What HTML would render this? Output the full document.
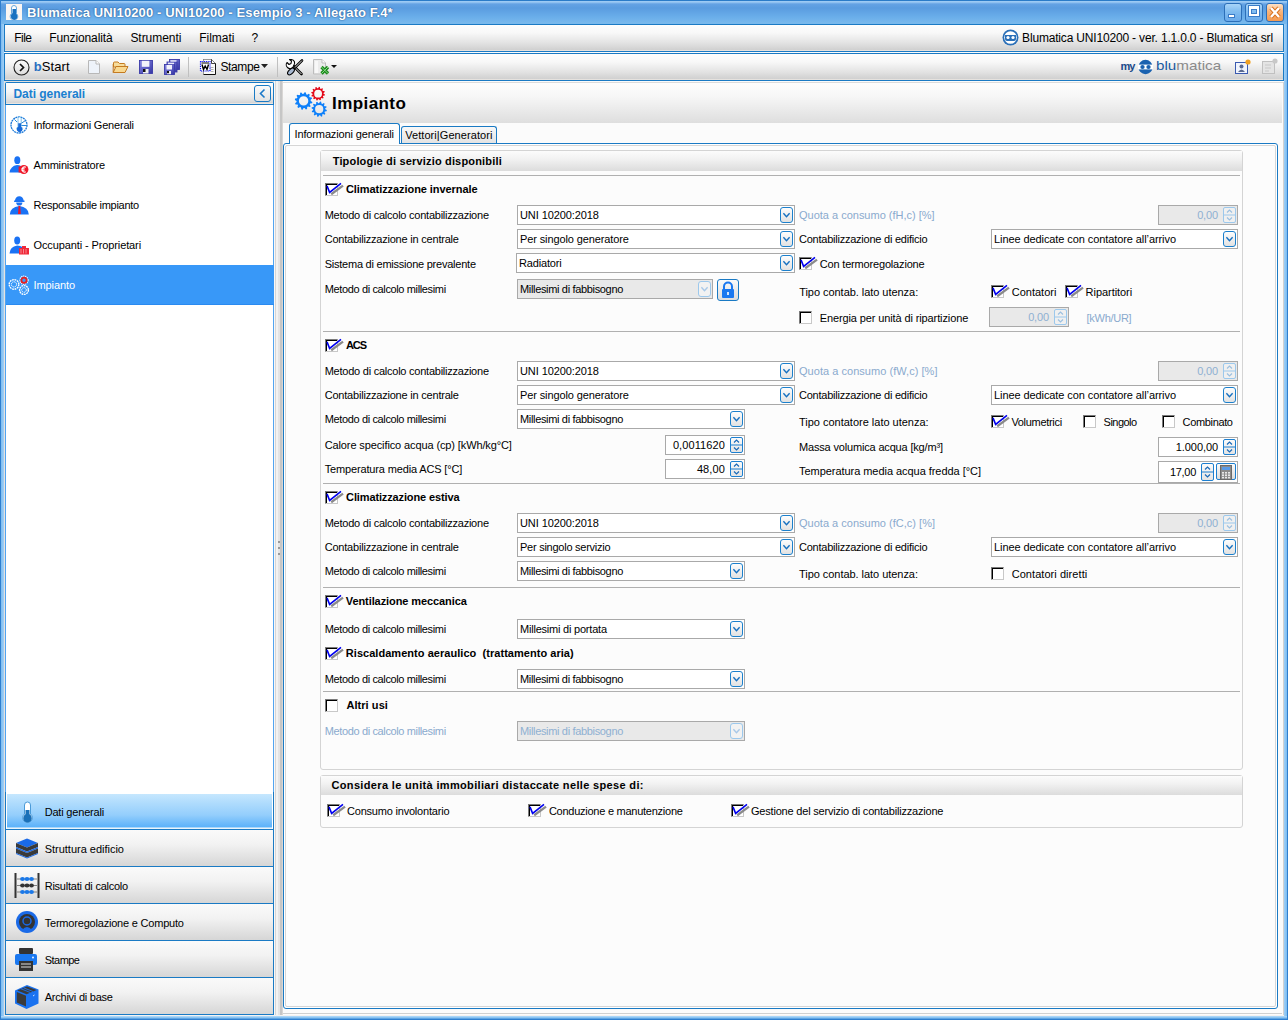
<!DOCTYPE html><html><head><meta charset="utf-8"><style>
*{margin:0;padding:0}
html,body{width:1288px;height:1020px;overflow:hidden;background:#a2d0f6}
body{position:relative;font-family:"Liberation Sans", sans-serif}
.t{position:absolute;white-space:nowrap;line-height:1;font-family:"Liberation Sans", sans-serif}
svg{overflow:visible}
</style></head><body>
<div style="position:absolute;left:0px;top:0px;width:1288px;height:1020px;background:linear-gradient(90deg,#2f7fcf 0,#2f7fcf 1px,#7cbcf0 1px,#a2d0f6 4px,#a2d0f6 1284px,#7cbcf0 1287px,#2f7fcf 1287px)"></div>
<div style="position:absolute;left:1px;top:0px;width:1286px;height:24px;background:linear-gradient(#2a7bc8 0,#2a7bc8 1px,#9ccaf4 1px,#9ccaf4 2px,#64a2e4 4px,#5a9ce0 8px,#6aaeea 17px,#78b8ec 23px,#78b8ec 24px)"></div>
<div style="position:absolute;left:1px;top:1016px;width:1286px;height:4px;background:linear-gradient(#a8d4f8 0,#a8d4f8 1px,#8cc4f0 1px,#8cc4f0 2px,#5ea4e4 2px,#5ea4e4 3px,#2f7fcf 3px)"></div>
<div style="position:absolute;left:6px;top:4px;width:16px;height:16px;background:#fbf6f2"></div>
<svg style="position:absolute;left:6px;top:4px;" width="16" height="16" viewBox="0 0 16 16"><path d="M8 1.5 a2.5 2.5 0 0 1 2.5 2.5 V9.5 a3.8 3.8 0 1 1 -5 0 V4 a2.5 2.5 0 0 1 2.5 -2.5z" fill="#fff" stroke="#6aa8dc" stroke-width="1"/><path d="M6.5 5 H10 V10 a3.2 3.2 0 1 1 -3.5 0z" fill="#1a72c0"/><circle cx="8" cy="12" r="3" fill="#1a72c0"/></svg>
<span class="t" id="t0" style="left:27px;top:6px;font-size:13px;font-weight:700;color:#fff;letter-spacing:0.112px;text-shadow:0 0 2px #2a5f9a,0 0 1px #2a5f9a">Blumatica UNI10200 - UNI10200 - Esempio 3 - Allegato F.4*</span>
<div style="position:absolute;left:1224px;top:3px;width:18px;height:19px;border:1px solid #2c6fb8;border-radius:3px;box-sizing:border-box;background:linear-gradient(#a8d4f8,#80bcf0 45%,#6aaaea)"></div>
<div style="position:absolute;left:1228px;top:14px;width:7px;height:4px;background:#fff;border:1px solid #3a7cc8;box-sizing:border-box"></div>
<div style="position:absolute;left:1245px;top:3px;width:18px;height:19px;border:1px solid #2c6fb8;border-radius:3px;box-sizing:border-box;background:linear-gradient(#a8d4f8,#80bcf0 45%,#6aaaea)"></div>
<div style="position:absolute;left:1249px;top:6px;width:10px;height:10px;border:2px solid #fff;border-top-width:3px;box-sizing:border-box;box-shadow:0 0 0 1px #3a7cc8, inset 0 0 0 1px #3a7cc8"></div>
<div style="position:absolute;left:1266px;top:3px;width:18px;height:19px;border:1px solid #2c6fb8;border-radius:3px;box-sizing:border-box;background:linear-gradient(#fde0c4,#f8b47a 45%,#f49a50)"></div>
<svg style="position:absolute;left:1266px;top:3px;" width="18" height="19" viewBox="0 0 18 19"><path d="M5 5 L13 14 M13 5 L5 14" stroke="#d8701c" stroke-width="4.2"/><path d="M5 5 L13 14 M13 5 L5 14" stroke="#fff" stroke-width="2.4"/></svg>
<div style="position:absolute;left:4px;top:24px;width:1280px;height:28px;border:1px solid #1a7ac4;box-sizing:border-box;background:linear-gradient(#fdfdfd 0,#f8f8f8 30%,#e2e2e2 70%,#d0d0d0 25px,#e6e2de 25px)"></div>
<div style="position:absolute;left:4px;top:52px;width:1280px;height:1px;background:#fbfbfb"></div>
<span class="t" id="t1" style="left:14.3px;top:32px;font-size:12px;font-weight:400;color:#000;letter-spacing:-0.581px;">File</span>
<span class="t" id="t2" style="left:49.3px;top:32px;font-size:12px;font-weight:400;color:#000;letter-spacing:-0.129px;">Funzionalità</span>
<span class="t" id="t3" style="left:130.4px;top:32px;font-size:12px;font-weight:400;color:#000;letter-spacing:-0.045px;">Strumenti</span>
<span class="t" id="t4" style="left:199.2px;top:32px;font-size:12px;font-weight:400;color:#000;letter-spacing:-0.024px;">Filmati</span>
<span class="t" id="t5" style="left:251.6px;top:32px;font-size:12px;font-weight:400;color:#000;;">?</span>
<svg style="position:absolute;left:1002px;top:29px;" width="17" height="17" viewBox="0 0 17 17"><circle cx="8.5" cy="8.5" r="8" fill="#2a6fb8"/><circle cx="8.5" cy="8.5" r="6.3" fill="#fff"/><path d="M3 6 h11 v4 a2 2 0 0 1 -2 2 h-7 a2 2 0 0 1 -2 -2z" fill="#2a6fb8"/><circle cx="6" cy="8.5" r="1.6" fill="#fff"/><circle cx="11" cy="8.5" r="1.6" fill="#fff"/></svg>
<span class="t" id="t6" style="right:15.099999999999909px;top:32px;font-size:12px;font-weight:400;color:#000;letter-spacing:-0.176px;">Blumatica UNI10200 - ver. 1.1.0.0 - Blumatica srl</span>
<div style="position:absolute;left:4px;top:53px;width:1280px;height:28px;border:1px solid #1a7ac4;box-sizing:border-box;background:linear-gradient(#fdfdfd 0,#f8f8f8 30%,#e2e2e2 70%,#d0d0d0 25px,#e6e2de 25px)"></div>
<svg style="position:absolute;left:13px;top:59px;" width="17" height="17" viewBox="0 0 17 17"><circle cx="8.5" cy="8.5" r="7.5" fill="none" stroke="#222" stroke-width="1.1"/><path d="M7 5 L10.5 8.5 L7 12" fill="none" stroke="#111" stroke-width="1.7"/></svg>
<span class="t" id="t7" style="left:33.7px;top:60px;font-size:13px;font-weight:400;color:#000;letter-spacing:0.116px;"><span style="color:#2a6fc0;font-weight:700">b</span>Start</span>
<svg style="position:absolute;left:87px;top:59px;" width="14" height="16" viewBox="0 0 14 16"><path d="M1.5 1.5 H9 L12.5 5 V14.5 H1.5z" fill="#eef3fa" stroke="#b8b8b8"/><path d="M9 1.5 V5 H12.5" fill="#fff" stroke="#b8b8b8"/></svg>
<svg style="position:absolute;left:112px;top:61px;" width="17" height="13" viewBox="0 0 17 13"><path d="M1.5 2 q0 -1 1 -1 h3.5 l1.5 1.5 h4.5 q1 0 1 1 v2.5 h-11.5z" fill="#f6dc9c" stroke="#c47a20" stroke-width="1"/><path d="M1.2 11.5 L4 5.5 H16 L13 11.5z" fill="#f8d890" stroke="#c47a20" stroke-width="1" stroke-linejoin="round"/><path d="M1.2 11.5 V3" stroke="#c47a20" stroke-width="1"/></svg>
<svg style="position:absolute;left:139px;top:60px;" width="14" height="14" viewBox="0 0 14 14"><defs><linearGradient id="fg" x1="0" y1="0" x2="1" y2="1"><stop offset="0" stop-color="#8a8ae4"/><stop offset="1" stop-color="#3434a4"/></linearGradient></defs><rect x="0.5" y="0.5" width="13" height="13" fill="url(#fg)" stroke="#3a3aa8" stroke-width="0.9"/><rect x="2.8" y="0.8" width="7.6" height="6" fill="#f2f2fa"/><rect x="4" y="9" width="5.5" height="4.5" fill="#f0f0f0"/><rect x="4" y="9" width="2.5" height="3" fill="#111"/></svg>
<svg style="position:absolute;left:164px;top:59px;" width="16" height="16" viewBox="0 0 16 16"><rect x="5.5" y="0.5" width="10" height="10" fill="url(#fg)" stroke="#3a3aa8" stroke-width="0.9"/><rect x="3" y="3" width="10" height="10" fill="url(#fg)" stroke="#3a3aa8" stroke-width="0.9"/><rect x="0.5" y="5.5" width="10" height="10" fill="url(#fg)" stroke="#3a3aa8" stroke-width="0.9"/><rect x="6.5" y="1.2" width="6" height="1.5" fill="#e8e8f8"/><rect x="4" y="3.7" width="6" height="1.5" fill="#e8e8f8"/><rect x="2.5" y="6" width="5.5" height="4.5" fill="#f2f2fa"/><rect x="3" y="12" width="4" height="3.2" fill="#f0f0f0"/><rect x="3" y="12" width="2" height="2.2" fill="#111"/></svg>
<div style="position:absolute;left:188px;top:57px;width:1px;height:20px;background:#c0c0c0"></div>
<svg style="position:absolute;left:200px;top:59px;" width="17" height="17" viewBox="0 0 17 17"><path d="M3.5 0.5 H11.5 L15.5 4.5 V15.5 H3.5z" fill="#fafafa" stroke="#111" stroke-width="1"/><path d="M3.5 15.5 V0.5 H11.5" fill="none" stroke="#9a9a9a" stroke-width="1"/><path d="M11.5 0.5 V4.5 H15.5" fill="#fff" stroke="#111" stroke-width="0.8"/><path d="M10.5 8.5 H13.5 M10.5 10.5 H13.5 M10.5 12.5 H13.5" stroke="#b0b0b0" stroke-width="1"/><rect x="0.5" y="2.5" width="9.5" height="9.5" fill="#fff" stroke="#0008f8" stroke-width="1.2" stroke-dasharray="1 0.8"/><rect x="1.5" y="3.5" width="7.5" height="1" fill="#000"/><path d="M2 5.5 L3.5 10.5 L5.2 7 L7 10.5 L8.5 5.5" fill="none" stroke="#000" stroke-width="1.4"/></svg>
<span class="t" id="t8" style="left:220.4px;top:61px;font-size:12px;font-weight:400;color:#000;letter-spacing:-0.352px;">Stampe</span>
<svg style="position:absolute;left:261px;top:64px;" width="7" height="4" viewBox="0 0 7 4"><path d="M0 0 H7 L3.5 4z" fill="#222"/></svg>
<div style="position:absolute;left:277px;top:57px;width:1px;height:20px;background:#c0c0c0"></div>
<svg style="position:absolute;left:286px;top:59px;" width="17" height="17" viewBox="0 0 17 17"><path d="M6.5 6 L15.5 15" stroke="#000" stroke-width="2.6" stroke-linecap="round"/><path d="M6.5 6 L15.5 15" stroke="#fff" stroke-width="0.9"/><path d="M1 3.5 L3 5.5 L5 4.5 L5.5 2 L3.5 0.5 L5.5 0.5 A3.5 3.5 0 0 1 8 6 L7 8 A3.5 3.5 0 0 1 1 3.5z" fill="#fff" stroke="#000" stroke-width="1.1" stroke-linejoin="round"/><path d="M16 1.5 L9 8.5" stroke="#000" stroke-width="2.6" stroke-linecap="round"/><path d="M16 1.5 L9 8.5" stroke="#fff" stroke-width="0.9"/><ellipse cx="5" cy="12.5" rx="4.2" ry="2.2" transform="rotate(-45 5 12.5)" fill="#a8b8d0" stroke="#000" stroke-width="1.1"/></svg>
<svg style="position:absolute;left:313px;top:59px;" width="17" height="17" viewBox="0 0 17 17"><path d="M0.5 0.5 H9 L12.5 4 V15 H0.5z" fill="#ececec" stroke="#bdbdbd" stroke-width="1"/><path d="M2 2 H5 V14 H2z" fill="#f8f8f8"/><path d="M9 0.5 V4 H12.5" fill="#fff" stroke="#bdbdbd" stroke-width="1"/><path d="M8.5 8 L15 14.5 M15 8 L8.5 14.5" stroke="#1a8a1a" stroke-width="3.2"/><path d="M8.5 8 L15 14.5 M15 8 L8.5 14.5" stroke="#8ad88a" stroke-width="1"/></svg>
<svg style="position:absolute;left:331px;top:65px;" width="6" height="3" viewBox="0 0 6 3"><path d="M0 0 H6 L3 3z" fill="#111"/></svg>
<span class="t" id="t9" style="left:1120.4px;top:61px;font-size:11px;font-weight:700;color:#1a4a8a;letter-spacing:-0.906px;">my</span>
<svg style="position:absolute;left:1138px;top:59px;" width="15" height="16" viewBox="0 0 15 16"><circle cx="7.5" cy="8" r="7.2" fill="#1a62b0"/><path d="M0 5.6 H15 V10.4 H0z" fill="#fff"/><ellipse cx="4.5" cy="8" rx="2.2" ry="2.1" fill="#1a62b0"/><ellipse cx="10.5" cy="8" rx="2.2" ry="2.1" fill="#1a62b0"/></svg>
<span class="t" id="t10" style="left:1156px;top:59px;font-size:13px;font-weight:400;color:#000;;transform:scale(1.17,0.92);transform-origin:0 100%"><span style="color:#1a5aa0">blu</span><span style="color:#8a8a8a">matica</span></span>
<svg style="position:absolute;left:1235px;top:59px;" width="16" height="15" viewBox="0 0 16 15"><rect x="0.5" y="3.5" width="12" height="11" fill="#f0f4fc" stroke="#3a5ab0"/><circle cx="6.5" cy="7.5" r="2" fill="#5a6a90"/><path d="M3 13 q3.5 -5 7 0z" fill="#5a6a90"/><circle cx="13" cy="3" r="2.6" fill="#f0a020"/></svg>
<svg style="position:absolute;left:1262px;top:58px;" width="16" height="16" viewBox="0 0 16 16"><rect x="0.5" y="3.5" width="12" height="12" fill="#e4e4e4" stroke="#c0c0c0"/><path d="M3 7 H9 M3 10 H9 M3 13 H7" stroke="#c8c8c8"/><circle cx="13" cy="3" r="2.6" fill="#c8c8c8"/></svg>
<div style="position:absolute;left:4px;top:81px;width:1px;height:934px;background:#e6e2de"></div>
<div style="position:absolute;left:4px;top:81px;width:270px;height:1px;background:#e4e0dc"></div>
<div style="position:absolute;left:5px;top:82px;width:269px;height:933px;border:1px solid #1a7ac4;border-radius:2px 2px 0 0;box-sizing:border-box;background:#fff"></div>
<div style="position:absolute;left:6px;top:83px;width:267px;height:21px;background:linear-gradient(#fdfdfd 0,#f6f6f6 40%,#e4e4e4 75%,#d4d4d4 20px,#ebe7e3 20px)"></div>
<div style="position:absolute;left:5px;top:104px;width:269px;height:1px;background:#1a7ac4"></div>
<span class="t" id="t11" style="left:13.4px;top:88px;font-size:12px;font-weight:700;color:#1a80d0;letter-spacing:-0.019px;">Dati generali</span>
<div style="position:absolute;left:254px;top:85px;width:17px;height:17px;border:1px solid #1a7ac4;border-radius:3px;box-sizing:border-box;background:linear-gradient(#fafafa,#e2e2e2)"></div>
<svg style="position:absolute;left:254px;top:85px;" width="17" height="17" viewBox="0 0 17 17"><path d="M10.5 4.5 L6.5 8.5 L10.5 12.5" fill="none" stroke="#1a78c8" stroke-width="1.6"/></svg>
<div style="position:absolute;left:5px;top:105px;width:1px;height:687px;background:#52a4f0"></div>
<div style="position:absolute;left:273px;top:105px;width:1px;height:687px;background:#52a4f0"></div>
<div style="position:absolute;left:273px;top:792px;width:1px;height:223px;background:#1a7ac4"></div>
<div style="position:absolute;left:6px;top:265px;width:268px;height:40px;background:linear-gradient(#3898f8 0,#3898f8 39px,#2a8af0 39px)"></div>
<span class="t" id="t12" style="left:33.5px;top:120px;font-size:11px;font-weight:400;color:#000;letter-spacing:-0.203px;">Informazioni Generali</span>
<span class="t" id="t13" style="left:33.5px;top:160px;font-size:11px;font-weight:400;color:#000;letter-spacing:-0.182px;">Amministratore</span>
<span class="t" id="t14" style="left:33.5px;top:200px;font-size:11px;font-weight:400;color:#000;letter-spacing:-0.280px;">Responsabile impianto</span>
<span class="t" id="t15" style="left:33.5px;top:240px;font-size:11px;font-weight:400;color:#000;letter-spacing:-0.111px;">Occupanti - Proprietari</span>
<span class="t" id="t16" style="left:33.5px;top:280px;font-size:11px;font-weight:400;color:#fff;letter-spacing:-0.072px;">Impianto</span>
<svg style="position:absolute;left:10px;top:116px;" width="18" height="18" viewBox="0 0 18 18"><circle cx="9" cy="9" r="8" fill="none" stroke="#1a78d8" stroke-width="1.3" stroke-dasharray="2 0.6"/><path d="M11 9.5 H17 M11 7.5 L15.5 4.5 M4.5 3.5 L7 6" stroke="#2a88d8" stroke-width="1"/><path d="M8 2.5 a1.6 1.6 0 0 1 3.2 0 V10.5 a2.8 2.8 0 1 1 -3.2 0z" fill="#fff" stroke="#5ab0e8" stroke-width="0.8"/><path d="M8.2 7.2 h2.8 v4 a2.5 2.5 0 1 1 -2.8 0z" fill="#1a6ad8"/><circle cx="9.6" cy="13" r="2.6" fill="#1a6ad8"/></svg>
<svg style="position:absolute;left:9px;top:156px;" width="20" height="18" viewBox="0 0 20 18"><ellipse cx="8.3" cy="4.2" rx="3" ry="3.9" fill="#1a72f4"/><path d="M0.5 16.5 q1 -6.5 7.5 -7.5 q2.5 0 4 1 V16.5z" fill="#1a72f4"/><rect x="9.6" y="10.5" width="1.7" height="6" fill="#f01828"/><circle cx="14.8" cy="13.5" r="4.6" fill="#f01828"/><path d="M16.8 11.2 a2.6 2.6 0 1 0 0 4.6 M12.4 12.8 h3.2 M12.4 14.3 h3.2" fill="none" stroke="#fff" stroke-width="1.1"/></svg>
<svg style="position:absolute;left:9px;top:195px;" width="20" height="20" viewBox="0 0 20 20"><path d="M6 5.6 a4.3 4.3 0 0 1 8.6 0 h0.9 v1.4 h-10.4 v-1.4z" fill="#1a72f4"/><path d="M7.2 7.5 a3.1 3.1 0 0 0 6.2 0z" fill="#1a72f4"/><path d="M0.8 19.5 q0.3 -7.5 9.5 -8.5 q9.2 1 9.5 8.5z" fill="#1a72f4"/><path d="M9.5 11 h1.8 v1.5 l0.5 6.5 h-2.8 l0.5 -6.5z" fill="#f01828"/></svg>
<svg style="position:absolute;left:9px;top:236px;" width="21" height="19" viewBox="0 0 21 19"><ellipse cx="8.2" cy="4.5" rx="3" ry="4" fill="#1a72f4"/><path d="M0.5 17.5 q0.5 -7 7.7 -8 q3.5 0 5 1.5 V17.5z" fill="#1a72f4"/><rect x="10" y="12" width="10" height="6.5" fill="#f02838"/><rect x="13" y="10" width="4" height="2" fill="#f02838"/><path d="M12 13 v4.5 M14.5 13 v4.5 M17 13 v4.5" stroke="#fff" stroke-width="0.8" opacity="0.55"/></svg>
<svg style="position:absolute;left:8px;top:276px;" width="22" height="20" viewBox="0 0 22 20"><circle cx="6" cy="8.4" r="4.8" fill="none" stroke="#fff" stroke-width="1.4" stroke-dasharray="1.8 0.7"/><circle cx="6" cy="8.4" r="2.6" fill="none" stroke="#fff" stroke-width="1" stroke-dasharray="1.4 0.6"/><circle cx="16" cy="4.2" r="4.1" fill="none" stroke="#fff" stroke-width="1.2" stroke-dasharray="1.2 0.8"/><circle cx="16" cy="4.2" r="2.6" fill="none" stroke="#e82020" stroke-width="1.8"/><circle cx="16" cy="14" r="4.4" fill="none" stroke="#fff" stroke-width="1.4" stroke-dasharray="1.8 0.7"/><circle cx="16" cy="14" r="2.3" fill="none" stroke="#fff" stroke-width="1" stroke-dasharray="1.4 0.6"/></svg>
<div style="position:absolute;left:5px;top:792px;width:1px;height:223px;background:#1a7ac4"></div>
<div style="position:absolute;left:7px;top:794px;width:265px;height:35px;background:linear-gradient(#c6e7fe 0,#b0dcfd 25%,#94cefc 60%,#5cb2fa 33px,#a8d8fc 33px,#a8d8fc 34px,#eaf4fc 34px)"></div>
<div style="position:absolute;left:5px;top:829px;width:269px;height:1px;background:#1a7ac4"></div>
<span class="t" id="t17" style="left:44.7px;top:807.0px;font-size:11px;font-weight:400;color:#000;letter-spacing:-0.189px;">Dati generali</span>
<div style="position:absolute;left:6px;top:830px;width:267px;height:36px;background:linear-gradient(#fafafa,#f2f2f2 40%,#d6d6d6)"></div>
<div style="position:absolute;left:5px;top:866px;width:269px;height:1px;background:#1a7ac4"></div>
<span class="t" id="t18" style="left:44.7px;top:844.0px;font-size:11px;font-weight:400;color:#000;letter-spacing:-0.011px;">Struttura edificio</span>
<div style="position:absolute;left:6px;top:867px;width:267px;height:36px;background:linear-gradient(#fafafa,#f2f2f2 40%,#d6d6d6)"></div>
<div style="position:absolute;left:5px;top:903px;width:269px;height:1px;background:#1a7ac4"></div>
<span class="t" id="t19" style="left:44.7px;top:881.0px;font-size:11px;font-weight:400;color:#000;letter-spacing:-0.239px;">Risultati di calcolo</span>
<div style="position:absolute;left:6px;top:904px;width:267px;height:36px;background:linear-gradient(#fafafa,#f2f2f2 40%,#d6d6d6)"></div>
<div style="position:absolute;left:5px;top:940px;width:269px;height:1px;background:#1a7ac4"></div>
<span class="t" id="t20" style="left:44.7px;top:918.0px;font-size:11px;font-weight:400;color:#000;letter-spacing:-0.200px;">Termoregolazione e Computo</span>
<div style="position:absolute;left:6px;top:941px;width:267px;height:36px;background:linear-gradient(#fafafa,#f2f2f2 40%,#d6d6d6)"></div>
<div style="position:absolute;left:5px;top:977px;width:269px;height:1px;background:#1a7ac4"></div>
<span class="t" id="t21" style="left:44.7px;top:955.0px;font-size:11px;font-weight:400;color:#000;letter-spacing:-0.524px;">Stampe</span>
<div style="position:absolute;left:6px;top:978px;width:267px;height:36px;background:linear-gradient(#fafafa,#f2f2f2 40%,#d6d6d6)"></div>
<div style="position:absolute;left:5px;top:1014px;width:269px;height:1px;background:#1a7ac4"></div>
<span class="t" id="t22" style="left:44.7px;top:992.0px;font-size:11px;font-weight:400;color:#000;letter-spacing:-0.232px;">Archivi di base</span>
<svg style="position:absolute;left:22px;top:801px;" width="11" height="22" viewBox="0 0 11 22"><path d="M5.5 1 a3 3 0 0 1 3 3 V13 a4.8 4.8 0 1 1 -6 0 V4 a3 3 0 0 1 3 -3z" fill="#fff" stroke="#4a9ad8" stroke-width="1"/><path d="M3.5 9 H7.5 V14 a4 4 0 1 1 -4 0z" fill="#1a70b8"/><circle cx="5.5" cy="17" r="4" fill="#1a70b8"/></svg>
<svg style="position:absolute;left:15px;top:838px;" width="24" height="21" viewBox="0 0 24 21"><path d="M12 0.5 L23 5 L12 9.5 L1 5z" fill="#1a6ae8"/><path d="M1 5 V9 L12 13.5 L23 9 V5 L12 9.5z" fill="#3a3a3a"/><path d="M1 9 V10.5 L12 15 L23 10.5 V9 L12 13.5z" fill="#1a6ae8"/><path d="M1 10.5 V15 L12 19.5 L23 15 V10.5 L12 15z" fill="#3a3a3a"/><path d="M1 15 V16 L12 20.5 L23 16 V15 L12 19.5z" fill="#1a6ae8"/></svg>
<svg style="position:absolute;left:14px;top:873px;" width="26" height="25" viewBox="0 0 26 25"><rect x="0.5" y="0" width="2" height="25" fill="#333"/><rect x="23.5" y="0" width="2" height="25" fill="#333"/><line x1="3" y1="6" x2="23" y2="6" stroke="#666" stroke-width="0.8"/><line x1="3" y1="12.5" x2="23" y2="12.5" stroke="#666" stroke-width="0.8"/><line x1="3" y1="19" x2="23" y2="19" stroke="#666" stroke-width="0.8"/><ellipse cx="8.5" cy="6" rx="2.4" ry="2.1" fill="#1a78e8"/><ellipse cx="13" cy="6" rx="2.4" ry="2.1" fill="#1a78e8"/><ellipse cx="17.5" cy="6" rx="2.4" ry="2.1" fill="#1a78e8"/><ellipse cx="8.5" cy="12.5" rx="2.4" ry="2.1" fill="#333"/><ellipse cx="13" cy="12.5" rx="2.4" ry="2.1" fill="#333"/><ellipse cx="17.5" cy="12.5" rx="2.4" ry="2.1" fill="#333"/><ellipse cx="8.5" cy="19" rx="2.4" ry="2.1" fill="#1a78e8"/><ellipse cx="13" cy="19" rx="2.4" ry="2.1" fill="#1a78e8"/><ellipse cx="17.5" cy="19" rx="2.4" ry="2.1" fill="#1a78e8"/></svg>
<svg style="position:absolute;left:15px;top:910px;" width="24" height="24" viewBox="0 0 24 24"><circle cx="12" cy="12" r="11" fill="#1a6ae8"/><circle cx="12" cy="12" r="8" fill="#333"/><circle cx="12" cy="11" r="4" fill="none" stroke="#1a6ae8" stroke-width="1.5"/><path d="M7 20 q5 -6 10 0" fill="#1a6ae8"/></svg>
<svg style="position:absolute;left:15px;top:948px;" width="22" height="23" viewBox="0 0 22 23"><rect x="4" y="0" width="14" height="6" fill="#333" rx="1"/><rect x="0" y="6" width="22" height="11" rx="2" fill="#1a78f0"/><rect x="4" y="13" width="14" height="10" fill="#333"/><path d="M6 16 H16 M6 19 H16" stroke="#ddd" stroke-width="1"/><circle cx="18" cy="9.5" r="0.9" fill="#fff"/></svg>
<svg style="position:absolute;left:14px;top:984px;" width="25" height="26" viewBox="0 0 25 26"><path d="M1 6.5 L13 1 L24.5 5.5 V19.5 L12.5 25 L1 19.5z" fill="#1a72f0"/><path d="M2.8 8 L12 11.8 V22.6 L2.8 18.5z" fill="#3a3a3a"/><path d="M3.2 6.5 L13 2.4 L22.6 6 L12.6 10.2z" fill="#3a3a3a"/><path d="M7 4.8 L16.5 8.6 M9.5 3.8 L19 7.5" stroke="#1a72f0" stroke-width="0.9"/><path d="M19 12 l1.5 -1" stroke="#fff" stroke-width="0.8"/></svg>
<div style="position:absolute;left:274px;top:81px;width:9px;height:934px;background:linear-gradient(90deg,#f8f8f8 0,#f8f8f8 1px,#d6d6d6 1px,#d6d6d6 2px,#f2f2f2 2px,#f2f2f2 4px,#e4e4e4 4px,#e4e4e4 6px,#c6c6c6 6px,#c6c6c6 8px,#d8d6d4 8px)"></div>
<div style="position:absolute;left:278px;top:541px;width:2px;height:2px;background:#999"></div>
<div style="position:absolute;left:278px;top:547px;width:2px;height:2px;background:#999"></div>
<div style="position:absolute;left:278px;top:553px;width:2px;height:2px;background:#999"></div>
<div style="position:absolute;left:283px;top:81px;width:1001px;height:934px;background:#fbfbfb"></div>
<div style="position:absolute;left:283px;top:82px;width:1000px;height:1px;background:#dcdcdc"></div>
<div style="position:absolute;left:283px;top:83px;width:999px;height:40px;background:linear-gradient(#fdfdfd,#f6f6f6 35%,#dedede)"></div>
<div style="position:absolute;left:1283px;top:82px;width:1px;height:933px;background:#d2d2d2"></div>
<svg style="position:absolute;left:294px;top:85px;" width="34" height="33" viewBox="0 0 34 33"><path d="M16.70 15.90 L18.34 16.91 L18.10 18.18 L16.20 18.51 L15.75 19.45 L16.66 21.15 L15.82 22.12 L14.01 21.46 L13.15 22.05 L13.09 23.98 L11.88 24.40 L10.64 22.92 L9.60 23.00 L8.59 24.64 L7.32 24.40 L6.99 22.50 L6.05 22.05 L4.35 22.96 L3.38 22.12 L4.04 20.31 L3.45 19.45 L1.52 19.39 L1.10 18.18 L2.58 16.94 L2.50 15.90 L0.86 14.89 L1.10 13.62 L3.00 13.29 L3.45 12.35 L2.54 10.65 L3.38 9.68 L5.19 10.34 L6.05 9.75 L6.11 7.82 L7.32 7.40 L8.56 8.88 L9.60 8.80 L10.61 7.16 L11.88 7.40 L12.21 9.30 L13.15 9.75 L14.85 8.84 L15.82 9.68 L15.16 11.49 L15.75 12.35 L17.68 12.41 L18.10 13.62 L16.62 14.86Z M14.3 15.9 A4.7 4.7 0 1 0 4.8999999999999995 15.9 A4.7 4.7 0 1 0 14.3 15.9Z" fill="#0e80fa" fill-rule="evenodd"/><path d="M29.60 8.70 L30.95 9.49 L30.76 10.49 L29.21 10.72 L28.86 11.45 L29.64 12.81 L28.98 13.58 L27.52 13.01 L26.85 13.46 L26.84 15.03 L25.89 15.36 L24.90 14.14 L24.10 14.20 L23.31 15.55 L22.31 15.36 L22.08 13.81 L21.35 13.46 L19.99 14.24 L19.22 13.58 L19.79 12.12 L19.34 11.45 L17.77 11.44 L17.44 10.49 L18.66 9.50 L18.60 8.70 L17.25 7.91 L17.44 6.91 L18.99 6.68 L19.34 5.95 L18.56 4.59 L19.22 3.82 L20.68 4.39 L21.35 3.94 L21.36 2.37 L22.31 2.04 L23.30 3.26 L24.10 3.20 L24.89 1.85 L25.89 2.04 L26.12 3.59 L26.85 3.94 L28.21 3.16 L28.98 3.82 L28.41 5.28 L28.86 5.95 L30.43 5.96 L30.76 6.91 L29.54 7.90Z M28.0 8.7 A3.9 3.9 0 1 0 20.200000000000003 8.7 A3.9 3.9 0 1 0 28.0 8.7Z" fill="#e40818" fill-rule="evenodd"/><path d="M31.30 24.20 L32.85 25.09 L32.64 26.19 L30.87 26.45 L30.48 27.25 L31.38 28.79 L30.64 29.64 L28.99 28.98 L28.25 29.48 L28.26 31.27 L27.19 31.64 L26.09 30.23 L25.20 30.30 L24.31 31.85 L23.21 31.64 L22.95 29.87 L22.15 29.48 L20.61 30.38 L19.76 29.64 L20.42 27.99 L19.92 27.25 L18.13 27.26 L17.76 26.19 L19.17 25.09 L19.10 24.20 L17.55 23.31 L17.76 22.21 L19.53 21.95 L19.92 21.15 L19.02 19.61 L19.76 18.76 L21.41 19.42 L22.15 18.92 L22.14 17.13 L23.21 16.76 L24.31 18.17 L25.20 18.10 L26.09 16.55 L27.19 16.76 L27.45 18.53 L28.25 18.92 L29.79 18.02 L30.64 18.76 L29.98 20.41 L30.48 21.15 L32.27 21.14 L32.64 22.21 L31.23 23.31Z M29.299999999999997 24.2 A4.1 4.1 0 1 0 21.1 24.2 A4.1 4.1 0 1 0 29.299999999999997 24.2Z" fill="#0e80fa" fill-rule="evenodd"/></svg>
<span class="t" id="t23" style="left:332px;top:95px;font-size:17px;font-weight:700;color:#000;letter-spacing:0.422px;font-family:"Liberation Sans",sans-serif">Impianto</span>
<div style="position:absolute;left:401px;top:126px;width:96px;height:18px;border:1px solid #1a7ac4;border-bottom:none;border-radius:3px 3px 0 0;box-sizing:border-box;background:linear-gradient(#f8f8f8,#e2e2e2)"></div>
<span class="t" id="t24" style="left:405.2px;top:129.5px;font-size:11px;font-weight:400;color:#000;letter-spacing:0.070px;">Vettori|Generatori</span>
<div style="position:absolute;left:283px;top:143px;width:995px;height:866px;border:1px solid #1a7ac4;border-radius:3px;box-sizing:border-box;background:#fff"></div>
<div style="position:absolute;left:285px;top:145px;width:991px;height:862px;border:1px solid #d6d6d6;border-radius:2px;box-sizing:border-box;background:#fcfcfc"></div>
<div style="position:absolute;left:289px;top:123px;width:111px;height:21px;border:1px solid #1a7ac4;border-bottom:none;border-radius:3px 3px 0 0;box-sizing:border-box;background:#fdfdfd"></div>
<span class="t" id="t25" style="left:294.5px;top:128.6px;font-size:11px;font-weight:400;color:#000;letter-spacing:-0.131px;">Informazioni generali</span>
<div style="position:absolute;left:283px;top:1013px;width:999px;height:1px;background:#d0d0d0"></div>
<div style="position:absolute;left:4px;top:1015px;width:1280px;height:1px;background:#f4f2f0"></div>
<div style="position:absolute;left:320px;top:150px;width:923px;height:620px;border:1px solid #d4d4d4;border-radius:3px;box-sizing:border-box;background:#fcfcfc"></div>
<div style="position:absolute;left:321px;top:151px;width:921px;height:20px;background:linear-gradient(#fcfcfc,#f2f2f2 40%,#dcdcdc)"></div>
<span class="t" id="t26" style="left:332.7px;top:156px;font-size:11px;font-weight:700;color:#000;letter-spacing:0.169px;">Tipologie di servizio disponibili</span>
<div style="position:absolute;left:323px;top:175px;width:917px;height:1px;background:#b0b0b0"></div>
<div style="position:absolute;left:325px;top:183px;width:13px;height:13px;border-left:1px solid #7a7a7a;border-top:1px solid #7a7a7a;border-right:1px solid #c8c8c8;border-bottom:1px solid #c8c8c8;box-sizing:border-box;background:#fff"></div>
<div style="position:absolute;left:326px;top:184px;width:11px;height:11px;border-left:1px solid #000;border-top:1px solid #000;box-sizing:border-box"></div>
<svg style="position:absolute;left:325px;top:182px;" width="20" height="15" viewBox="0 0 20 15"><path d="M6.2 12.3 L18 3.6" fill="none" stroke="#8a8a8a" stroke-width="2.3"/><path d="M2 3.9 L4.6 10.4 L16 1.3" fill="none" stroke="#0000f0" stroke-width="1.6"/></svg>
<span class="t" id="t27" style="left:346px;top:184px;font-size:11px;font-weight:700;color:#000;letter-spacing:-0.069px;">Climatizzazione invernale</span>
<span class="t" id="t28" style="left:324.7px;top:210px;font-size:11px;font-weight:400;color:#000;letter-spacing:-0.239px;">Metodo di calcolo contabilizzazione</span>
<div style="position:absolute;left:517px;top:205px;width:278px;height:20px;border:1px solid #a9a9a9;box-sizing:border-box;background:#fff"></div>
<span class="t" id="t29" style="left:520px;top:210px;font-size:11px;font-weight:400;color:#000;letter-spacing:-0.087px;">UNI 10200:2018</span>
<div style="position:absolute;left:780px;top:207px;width:13px;height:16px;border:1px solid #1c80cc;border-radius:3px;box-sizing:border-box;background:linear-gradient(#fdfdfd,#e2e2e2)"></div>
<svg style="position:absolute;left:780px;top:207px;" width="13" height="16" viewBox="0 0 13 16"><path d="M3.4 6.2 L6.5 9.6 L9.6 6.2" fill="none" stroke="#1670c0" stroke-width="1.4"/></svg>
<span class="t" id="t30" style="left:799px;top:210px;font-size:11px;font-weight:400;color:#8aaace;letter-spacing:-0.005px;">Quota a consumo (fH,c) [%]</span>
<div style="position:absolute;left:1158px;top:205px;width:80px;height:20px;border:1px solid #a9a9a9;box-sizing:border-box;background:#e9e9e9"></div>
<div style="position:absolute;left:1223px;top:207px;width:13px;height:16px;border:1px solid #9cc8ec;border-radius:2px;box-sizing:border-box;background:#f0f0f0"></div>
<svg style="position:absolute;left:1223px;top:207px;" width="13" height="16" viewBox="0 0 13 16"><line x1="1" y1="8.0" x2="12" y2="8.0" stroke="#9cc8ec" stroke-width="1"/><path d="M4 5.5 L6.5 3.0 L9 5.5" fill="none" stroke="#9cc0e0" stroke-width="1.2"/><path d="M4 10.5 L6.5 13.0 L9 10.5" fill="none" stroke="#9cc0e0" stroke-width="1.2"/></svg>
<span class="t" id="t31" style="right:70px;top:210px;font-size:11px;font-weight:400;color:#8fb0d2;letter-spacing:-0.141px;">0,00</span>
<span class="t" id="t32" style="left:324.7px;top:234px;font-size:11px;font-weight:400;color:#000;letter-spacing:-0.205px;">Contabilizzazione in centrale</span>
<div style="position:absolute;left:517px;top:229px;width:278px;height:20px;border:1px solid #a9a9a9;box-sizing:border-box;background:#fff"></div>
<span class="t" id="t33" style="left:520px;top:234px;font-size:11px;font-weight:400;color:#000;letter-spacing:-0.119px;">Per singolo generatore</span>
<div style="position:absolute;left:780px;top:231px;width:13px;height:16px;border:1px solid #1c80cc;border-radius:3px;box-sizing:border-box;background:linear-gradient(#fdfdfd,#e2e2e2)"></div>
<svg style="position:absolute;left:780px;top:231px;" width="13" height="16" viewBox="0 0 13 16"><path d="M3.4 6.2 L6.5 9.6 L9.6 6.2" fill="none" stroke="#1670c0" stroke-width="1.4"/></svg>
<span class="t" id="t34" style="left:799px;top:234px;font-size:11px;font-weight:400;color:#000;letter-spacing:-0.237px;">Contabilizzazione di edificio</span>
<div style="position:absolute;left:991px;top:229px;width:247px;height:20px;border:1px solid #a9a9a9;box-sizing:border-box;background:#fff"></div>
<span class="t" id="t35" style="left:994px;top:234px;font-size:11px;font-weight:400;color:#000;letter-spacing:-0.086px;">Linee dedicate con contatore all’arrivo</span>
<div style="position:absolute;left:1223px;top:231px;width:13px;height:16px;border:1px solid #1c80cc;border-radius:3px;box-sizing:border-box;background:linear-gradient(#fdfdfd,#e2e2e2)"></div>
<svg style="position:absolute;left:1223px;top:231px;" width="13" height="16" viewBox="0 0 13 16"><path d="M3.4 6.2 L6.5 9.6 L9.6 6.2" fill="none" stroke="#1670c0" stroke-width="1.4"/></svg>
<span class="t" id="t36" style="left:324.7px;top:259px;font-size:11px;font-weight:400;color:#000;letter-spacing:-0.235px;">Sistema di emissione prevalente</span>
<div style="position:absolute;left:516px;top:253px;width:279px;height:20px;border:1px solid #a9a9a9;box-sizing:border-box;background:#fff"></div>
<span class="t" id="t37" style="left:519px;top:258px;font-size:11px;font-weight:400;color:#000;letter-spacing:-0.166px;">Radiatori</span>
<div style="position:absolute;left:780px;top:255px;width:13px;height:16px;border:1px solid #1c80cc;border-radius:3px;box-sizing:border-box;background:linear-gradient(#fdfdfd,#e2e2e2)"></div>
<svg style="position:absolute;left:780px;top:255px;" width="13" height="16" viewBox="0 0 13 16"><path d="M3.4 6.2 L6.5 9.6 L9.6 6.2" fill="none" stroke="#1670c0" stroke-width="1.4"/></svg>
<div style="position:absolute;left:799px;top:257px;width:13px;height:13px;border-left:1px solid #7a7a7a;border-top:1px solid #7a7a7a;border-right:1px solid #c8c8c8;border-bottom:1px solid #c8c8c8;box-sizing:border-box;background:#fff"></div>
<div style="position:absolute;left:800px;top:258px;width:11px;height:11px;border-left:1px solid #000;border-top:1px solid #000;box-sizing:border-box"></div>
<svg style="position:absolute;left:799px;top:256px;" width="20" height="15" viewBox="0 0 20 15"><path d="M6.2 12.3 L18 3.6" fill="none" stroke="#8a8a8a" stroke-width="2.3"/><path d="M2 3.9 L4.6 10.4 L16 1.3" fill="none" stroke="#0000f0" stroke-width="1.6"/></svg>
<span class="t" id="t38" style="left:819.7px;top:259px;font-size:11px;font-weight:400;color:#000;letter-spacing:-0.170px;">Con termoregolazione</span>
<span class="t" id="t39" style="left:324.7px;top:284px;font-size:11px;font-weight:400;color:#000;letter-spacing:-0.363px;">Metodo di calcolo millesimi</span>
<div style="position:absolute;left:517px;top:279px;width:196px;height:20px;border:1px solid #a9a9a9;box-sizing:border-box;background:#e9e9e9"></div>
<span class="t" id="t40" style="left:520px;top:284px;font-size:11px;font-weight:400;color:#000;letter-spacing:-0.335px;">Millesimi di fabbisogno</span>
<div style="position:absolute;left:698px;top:281px;width:13px;height:16px;border:1px solid #9cc8ec;border-radius:3px;box-sizing:border-box;background:#f2f2f2"></div>
<svg style="position:absolute;left:698px;top:281px;" width="13" height="16" viewBox="0 0 13 16"><path d="M3.4 6.2 L6.5 9.6 L9.6 6.2" fill="none" stroke="#a8c8e8" stroke-width="1.4"/></svg>
<div style="position:absolute;left:717px;top:279px;width:22px;height:22px;border:1px solid #1a7ac4;border-radius:3px;box-sizing:border-box;background:linear-gradient(#fafafa,#dcdcdc)"></div>
<svg style="position:absolute;left:717px;top:279px;" width="22" height="22" viewBox="0 0 22 22"><path d="M7 10 V7.5 a4 4 0 0 1 8 0 V10" fill="none" stroke="#1a78f0" stroke-width="2"/><rect x="5" y="10" width="12" height="9" rx="1" fill="#1a78f0"/><rect x="10.2" y="13" width="1.6" height="3" fill="#fff"/></svg>
<span class="t" id="t41" style="left:799.2px;top:287px;font-size:11px;font-weight:400;color:#000;letter-spacing:-0.044px;">Tipo contab. lato utenza:</span>
<div style="position:absolute;left:991px;top:285px;width:13px;height:13px;border-left:1px solid #7a7a7a;border-top:1px solid #7a7a7a;border-right:1px solid #c8c8c8;border-bottom:1px solid #c8c8c8;box-sizing:border-box;background:#fff"></div>
<div style="position:absolute;left:992px;top:286px;width:11px;height:11px;border-left:1px solid #000;border-top:1px solid #000;box-sizing:border-box"></div>
<svg style="position:absolute;left:991px;top:284px;" width="20" height="15" viewBox="0 0 20 15"><path d="M6.2 12.3 L18 3.6" fill="none" stroke="#8a8a8a" stroke-width="2.3"/><path d="M2 3.9 L4.6 10.4 L16 1.3" fill="none" stroke="#0000f0" stroke-width="1.6"/></svg>
<span class="t" id="t42" style="left:1011.7px;top:286.5px;font-size:11px;font-weight:400;color:#000;letter-spacing:0.007px;">Contatori</span>
<div style="position:absolute;left:1065px;top:285px;width:13px;height:13px;border-left:1px solid #7a7a7a;border-top:1px solid #7a7a7a;border-right:1px solid #c8c8c8;border-bottom:1px solid #c8c8c8;box-sizing:border-box;background:#fff"></div>
<div style="position:absolute;left:1066px;top:286px;width:11px;height:11px;border-left:1px solid #000;border-top:1px solid #000;box-sizing:border-box"></div>
<svg style="position:absolute;left:1065px;top:284px;" width="20" height="15" viewBox="0 0 20 15"><path d="M6.2 12.3 L18 3.6" fill="none" stroke="#8a8a8a" stroke-width="2.3"/><path d="M2 3.9 L4.6 10.4 L16 1.3" fill="none" stroke="#0000f0" stroke-width="1.6"/></svg>
<span class="t" id="t43" style="left:1085.6px;top:286.5px;font-size:11px;font-weight:400;color:#000;letter-spacing:-0.048px;">Ripartitori</span>
<div style="position:absolute;left:799px;top:311px;width:13px;height:13px;border-left:1px solid #7a7a7a;border-top:1px solid #7a7a7a;border-right:1px solid #c8c8c8;border-bottom:1px solid #c8c8c8;box-sizing:border-box;background:#fff"></div>
<div style="position:absolute;left:800px;top:312px;width:11px;height:11px;border-left:1px solid #000;border-top:1px solid #000;box-sizing:border-box"></div>
<span class="t" id="t44" style="left:819.7px;top:313px;font-size:11px;font-weight:400;color:#000;letter-spacing:-0.115px;">Energia per unità di ripartizione</span>
<div style="position:absolute;left:989px;top:307px;width:80px;height:20px;border:1px solid #a9a9a9;box-sizing:border-box;background:#e9e9e9"></div>
<div style="position:absolute;left:1054px;top:309px;width:13px;height:16px;border:1px solid #9cc8ec;border-radius:2px;box-sizing:border-box;background:#f0f0f0"></div>
<svg style="position:absolute;left:1054px;top:309px;" width="13" height="16" viewBox="0 0 13 16"><line x1="1" y1="8.0" x2="12" y2="8.0" stroke="#9cc8ec" stroke-width="1"/><path d="M4 5.5 L6.5 3.0 L9 5.5" fill="none" stroke="#9cc0e0" stroke-width="1.2"/><path d="M4 10.5 L6.5 13.0 L9 10.5" fill="none" stroke="#9cc0e0" stroke-width="1.2"/></svg>
<span class="t" id="t45" style="right:239px;top:312px;font-size:11px;font-weight:400;color:#8fb0d2;letter-spacing:-0.141px;">0,00</span>
<span class="t" id="t46" style="left:1086.6px;top:313px;font-size:11px;font-weight:400;color:#8aaace;letter-spacing:-0.295px;">[kWh/UR]</span>
<div style="position:absolute;left:323px;top:331px;width:917px;height:1px;background:#b0b0b0"></div>
<div style="position:absolute;left:325px;top:339px;width:13px;height:13px;border-left:1px solid #7a7a7a;border-top:1px solid #7a7a7a;border-right:1px solid #c8c8c8;border-bottom:1px solid #c8c8c8;box-sizing:border-box;background:#fff"></div>
<div style="position:absolute;left:326px;top:340px;width:11px;height:11px;border-left:1px solid #000;border-top:1px solid #000;box-sizing:border-box"></div>
<svg style="position:absolute;left:325px;top:338px;" width="20" height="15" viewBox="0 0 20 15"><path d="M6.2 12.3 L18 3.6" fill="none" stroke="#8a8a8a" stroke-width="2.3"/><path d="M2 3.9 L4.6 10.4 L16 1.3" fill="none" stroke="#0000f0" stroke-width="1.6"/></svg>
<span class="t" id="t47" style="left:346px;top:340px;font-size:11px;font-weight:700;color:#000;letter-spacing:-1.117px;">ACS</span>
<span class="t" id="t48" style="left:324.7px;top:366px;font-size:11px;font-weight:400;color:#000;letter-spacing:-0.239px;">Metodo di calcolo contabilizzazione</span>
<div style="position:absolute;left:517px;top:361px;width:278px;height:20px;border:1px solid #a9a9a9;box-sizing:border-box;background:#fff"></div>
<span class="t" id="t49" style="left:520px;top:366px;font-size:11px;font-weight:400;color:#000;letter-spacing:-0.087px;">UNI 10200:2018</span>
<div style="position:absolute;left:780px;top:363px;width:13px;height:16px;border:1px solid #1c80cc;border-radius:3px;box-sizing:border-box;background:linear-gradient(#fdfdfd,#e2e2e2)"></div>
<svg style="position:absolute;left:780px;top:363px;" width="13" height="16" viewBox="0 0 13 16"><path d="M3.4 6.2 L6.5 9.6 L9.6 6.2" fill="none" stroke="#1670c0" stroke-width="1.4"/></svg>
<span class="t" id="t50" style="left:799px;top:366px;font-size:11px;font-weight:400;color:#8aaace;letter-spacing:0.037px;">Quota a consumo (fW,c) [%]</span>
<div style="position:absolute;left:1158px;top:361px;width:80px;height:20px;border:1px solid #a9a9a9;box-sizing:border-box;background:#e9e9e9"></div>
<div style="position:absolute;left:1223px;top:363px;width:13px;height:16px;border:1px solid #9cc8ec;border-radius:2px;box-sizing:border-box;background:#f0f0f0"></div>
<svg style="position:absolute;left:1223px;top:363px;" width="13" height="16" viewBox="0 0 13 16"><line x1="1" y1="8.0" x2="12" y2="8.0" stroke="#9cc8ec" stroke-width="1"/><path d="M4 5.5 L6.5 3.0 L9 5.5" fill="none" stroke="#9cc0e0" stroke-width="1.2"/><path d="M4 10.5 L6.5 13.0 L9 10.5" fill="none" stroke="#9cc0e0" stroke-width="1.2"/></svg>
<span class="t" id="t51" style="right:70px;top:366px;font-size:11px;font-weight:400;color:#8fb0d2;letter-spacing:-0.141px;">0,00</span>
<span class="t" id="t52" style="left:324.7px;top:390px;font-size:11px;font-weight:400;color:#000;letter-spacing:-0.205px;">Contabilizzazione in centrale</span>
<div style="position:absolute;left:517px;top:385px;width:278px;height:20px;border:1px solid #a9a9a9;box-sizing:border-box;background:#fff"></div>
<span class="t" id="t53" style="left:520px;top:390px;font-size:11px;font-weight:400;color:#000;letter-spacing:-0.119px;">Per singolo generatore</span>
<div style="position:absolute;left:780px;top:387px;width:13px;height:16px;border:1px solid #1c80cc;border-radius:3px;box-sizing:border-box;background:linear-gradient(#fdfdfd,#e2e2e2)"></div>
<svg style="position:absolute;left:780px;top:387px;" width="13" height="16" viewBox="0 0 13 16"><path d="M3.4 6.2 L6.5 9.6 L9.6 6.2" fill="none" stroke="#1670c0" stroke-width="1.4"/></svg>
<span class="t" id="t54" style="left:799px;top:390px;font-size:11px;font-weight:400;color:#000;letter-spacing:-0.237px;">Contabilizzazione di edificio</span>
<div style="position:absolute;left:991px;top:385px;width:247px;height:20px;border:1px solid #a9a9a9;box-sizing:border-box;background:#fff"></div>
<span class="t" id="t55" style="left:994px;top:390px;font-size:11px;font-weight:400;color:#000;letter-spacing:-0.086px;">Linee dedicate con contatore all’arrivo</span>
<div style="position:absolute;left:1223px;top:387px;width:13px;height:16px;border:1px solid #1c80cc;border-radius:3px;box-sizing:border-box;background:linear-gradient(#fdfdfd,#e2e2e2)"></div>
<svg style="position:absolute;left:1223px;top:387px;" width="13" height="16" viewBox="0 0 13 16"><path d="M3.4 6.2 L6.5 9.6 L9.6 6.2" fill="none" stroke="#1670c0" stroke-width="1.4"/></svg>
<span class="t" id="t56" style="left:324.7px;top:414px;font-size:11px;font-weight:400;color:#000;letter-spacing:-0.363px;">Metodo di calcolo millesimi</span>
<div style="position:absolute;left:517px;top:409px;width:228px;height:20px;border:1px solid #a9a9a9;box-sizing:border-box;background:#fff"></div>
<span class="t" id="t57" style="left:520px;top:414px;font-size:11px;font-weight:400;color:#000;letter-spacing:-0.335px;">Millesimi di fabbisogno</span>
<div style="position:absolute;left:730px;top:411px;width:13px;height:16px;border:1px solid #1c80cc;border-radius:3px;box-sizing:border-box;background:linear-gradient(#fdfdfd,#e2e2e2)"></div>
<svg style="position:absolute;left:730px;top:411px;" width="13" height="16" viewBox="0 0 13 16"><path d="M3.4 6.2 L6.5 9.6 L9.6 6.2" fill="none" stroke="#1670c0" stroke-width="1.4"/></svg>
<span class="t" id="t58" style="left:799px;top:417px;font-size:11px;font-weight:400;color:#000;letter-spacing:-0.009px;">Tipo contatore lato utenza:</span>
<div style="position:absolute;left:991px;top:415px;width:13px;height:13px;border-left:1px solid #7a7a7a;border-top:1px solid #7a7a7a;border-right:1px solid #c8c8c8;border-bottom:1px solid #c8c8c8;box-sizing:border-box;background:#fff"></div>
<div style="position:absolute;left:992px;top:416px;width:11px;height:11px;border-left:1px solid #000;border-top:1px solid #000;box-sizing:border-box"></div>
<svg style="position:absolute;left:991px;top:414px;" width="20" height="15" viewBox="0 0 20 15"><path d="M6.2 12.3 L18 3.6" fill="none" stroke="#8a8a8a" stroke-width="2.3"/><path d="M2 3.9 L4.6 10.4 L16 1.3" fill="none" stroke="#0000f0" stroke-width="1.6"/></svg>
<span class="t" id="t59" style="left:1011.4px;top:417px;font-size:11px;font-weight:400;color:#000;letter-spacing:-0.310px;">Volumetrici</span>
<div style="position:absolute;left:1083px;top:415px;width:13px;height:13px;border-left:1px solid #7a7a7a;border-top:1px solid #7a7a7a;border-right:1px solid #c8c8c8;border-bottom:1px solid #c8c8c8;box-sizing:border-box;background:#fff"></div>
<div style="position:absolute;left:1084px;top:416px;width:11px;height:11px;border-left:1px solid #000;border-top:1px solid #000;box-sizing:border-box"></div>
<span class="t" id="t60" style="left:1103.6px;top:417px;font-size:11px;font-weight:400;color:#000;letter-spacing:-0.534px;">Singolo</span>
<div style="position:absolute;left:1162px;top:415px;width:13px;height:13px;border-left:1px solid #7a7a7a;border-top:1px solid #7a7a7a;border-right:1px solid #c8c8c8;border-bottom:1px solid #c8c8c8;box-sizing:border-box;background:#fff"></div>
<div style="position:absolute;left:1163px;top:416px;width:11px;height:11px;border-left:1px solid #000;border-top:1px solid #000;box-sizing:border-box"></div>
<span class="t" id="t61" style="left:1182.6px;top:417px;font-size:11px;font-weight:400;color:#000;letter-spacing:-0.350px;">Combinato</span>
<span class="t" id="t62" style="left:324.7px;top:440px;font-size:11px;font-weight:400;color:#000;letter-spacing:-0.115px;">Calore specifico acqua (cp) [kWh/kg°C]</span>
<div style="position:absolute;left:665px;top:435px;width:80px;height:20px;border:1px solid #a9a9a9;box-sizing:border-box;background:#fff"></div>
<div style="position:absolute;left:730px;top:437px;width:13px;height:16px;border:1px solid #1c7fd0;border-radius:2px;box-sizing:border-box;background:linear-gradient(#fbfbfb,#e4e4e4)"></div>
<svg style="position:absolute;left:730px;top:437px;" width="13" height="16" viewBox="0 0 13 16"><line x1="1" y1="8.0" x2="12" y2="8.0" stroke="#1c7fd0" stroke-width="1"/><path d="M4 5.5 L6.5 3.0 L9 5.5" fill="none" stroke="#1a6ab8" stroke-width="1.2"/><path d="M4 10.5 L6.5 13.0 L9 10.5" fill="none" stroke="#1a6ab8" stroke-width="1.2"/></svg>
<span class="t" id="t63" style="right:563px;top:440px;font-size:11px;font-weight:400;color:#000;letter-spacing:0.102px;">0,0011620</span>
<span class="t" id="t64" style="left:799px;top:442px;font-size:11px;font-weight:400;color:#000;letter-spacing:-0.169px;">Massa volumica acqua [kg/m³]</span>
<div style="position:absolute;left:1158px;top:437px;width:80px;height:20px;border:1px solid #a9a9a9;box-sizing:border-box;background:#fff"></div>
<div style="position:absolute;left:1223px;top:439px;width:13px;height:16px;border:1px solid #1c7fd0;border-radius:2px;box-sizing:border-box;background:linear-gradient(#fbfbfb,#e4e4e4)"></div>
<svg style="position:absolute;left:1223px;top:439px;" width="13" height="16" viewBox="0 0 13 16"><line x1="1" y1="8.0" x2="12" y2="8.0" stroke="#1c7fd0" stroke-width="1"/><path d="M4 5.5 L6.5 3.0 L9 5.5" fill="none" stroke="#1a6ab8" stroke-width="1.2"/><path d="M4 10.5 L6.5 13.0 L9 10.5" fill="none" stroke="#1a6ab8" stroke-width="1.2"/></svg>
<span class="t" id="t65" style="right:70px;top:442px;font-size:11px;font-weight:400;color:#000;letter-spacing:-0.075px;">1.000,00</span>
<span class="t" id="t66" style="left:324.7px;top:464px;font-size:11px;font-weight:400;color:#000;letter-spacing:-0.150px;">Temperatura media ACS [°C]</span>
<div style="position:absolute;left:665px;top:459px;width:80px;height:20px;border:1px solid #a9a9a9;box-sizing:border-box;background:#fff"></div>
<div style="position:absolute;left:730px;top:461px;width:13px;height:16px;border:1px solid #1c7fd0;border-radius:2px;box-sizing:border-box;background:linear-gradient(#fbfbfb,#e4e4e4)"></div>
<svg style="position:absolute;left:730px;top:461px;" width="13" height="16" viewBox="0 0 13 16"><line x1="1" y1="8.0" x2="12" y2="8.0" stroke="#1c7fd0" stroke-width="1"/><path d="M4 5.5 L6.5 3.0 L9 5.5" fill="none" stroke="#1a6ab8" stroke-width="1.2"/><path d="M4 10.5 L6.5 13.0 L9 10.5" fill="none" stroke="#1a6ab8" stroke-width="1.2"/></svg>
<span class="t" id="t67" style="right:563px;top:464px;font-size:11px;font-weight:400;color:#000;letter-spacing:0.117px;">48,00</span>
<span class="t" id="t68" style="left:799px;top:466px;font-size:11px;font-weight:400;color:#000;letter-spacing:-0.046px;">Temperatura media acqua fredda [°C]</span>
<div style="position:absolute;left:1158px;top:461px;width:80px;height:22px;border:1px solid #a9a9a9;box-sizing:border-box;background:#fff"></div>
<div style="position:absolute;left:1201px;top:463px;width:13px;height:18px;border:1px solid #1c7fd0;border-radius:2px;box-sizing:border-box;background:linear-gradient(#fbfbfb,#e4e4e4)"></div>
<svg style="position:absolute;left:1201px;top:463px;" width="13" height="18" viewBox="0 0 13 18"><line x1="1" y1="9.0" x2="12" y2="9.0" stroke="#1c7fd0" stroke-width="1"/><path d="M4 6.5 L6.5 4.0 L9 6.5" fill="none" stroke="#1a6ab8" stroke-width="1.2"/><path d="M4 11.5 L6.5 14.0 L9 11.5" fill="none" stroke="#1a6ab8" stroke-width="1.2"/></svg>
<div style="position:absolute;left:1216px;top:463px;width:20px;height:17px;border:1px solid #1c7fd0;border-radius:2px;box-sizing:border-box;background:linear-gradient(#fafafa,#dcdcdc)"></div>
<svg style="position:absolute;left:1220px;top:465px;" width="12" height="15" viewBox="0 0 12 15"><rect x="0.5" y="0.5" width="11" height="14" fill="#8a8a8a" stroke="#6a6a6a"/><rect x="2" y="2" width="8" height="3" fill="#5a9ae6"/><rect x="2" y="7.0" width="2" height="1.6" fill="#e8e8e8"/><rect x="5" y="7.0" width="2" height="1.6" fill="#e8e8e8"/><rect x="8" y="7.0" width="2" height="1.6" fill="#e8e8e8"/><rect x="2" y="9.4" width="2" height="1.6" fill="#e8e8e8"/><rect x="5" y="9.4" width="2" height="1.6" fill="#e8e8e8"/><rect x="8" y="9.4" width="2" height="1.6" fill="#e8e8e8"/><rect x="2" y="11.8" width="2" height="1.6" fill="#e8e8e8"/><rect x="5" y="11.8" width="2" height="1.6" fill="#e8e8e8"/><rect x="8" y="11.8" width="2" height="1.6" fill="#e8e8e8"/></svg>
<span class="t" id="t69" style="right:92px;top:467px;font-size:11px;font-weight:400;color:#000;letter-spacing:-0.308px;">17,00</span>
<div style="position:absolute;left:323px;top:483px;width:917px;height:1px;background:#b0b0b0"></div>
<div style="position:absolute;left:325px;top:491px;width:13px;height:13px;border-left:1px solid #7a7a7a;border-top:1px solid #7a7a7a;border-right:1px solid #c8c8c8;border-bottom:1px solid #c8c8c8;box-sizing:border-box;background:#fff"></div>
<div style="position:absolute;left:326px;top:492px;width:11px;height:11px;border-left:1px solid #000;border-top:1px solid #000;box-sizing:border-box"></div>
<svg style="position:absolute;left:325px;top:490px;" width="20" height="15" viewBox="0 0 20 15"><path d="M6.2 12.3 L18 3.6" fill="none" stroke="#8a8a8a" stroke-width="2.3"/><path d="M2 3.9 L4.6 10.4 L16 1.3" fill="none" stroke="#0000f0" stroke-width="1.6"/></svg>
<span class="t" id="t70" style="left:346.1px;top:492px;font-size:11px;font-weight:700;color:#000;letter-spacing:-0.131px;">Climatizzazione estiva</span>
<span class="t" id="t71" style="left:324.7px;top:518px;font-size:11px;font-weight:400;color:#000;letter-spacing:-0.239px;">Metodo di calcolo contabilizzazione</span>
<div style="position:absolute;left:517px;top:513px;width:278px;height:20px;border:1px solid #a9a9a9;box-sizing:border-box;background:#fff"></div>
<span class="t" id="t72" style="left:520px;top:518px;font-size:11px;font-weight:400;color:#000;letter-spacing:-0.087px;">UNI 10200:2018</span>
<div style="position:absolute;left:780px;top:515px;width:13px;height:16px;border:1px solid #1c80cc;border-radius:3px;box-sizing:border-box;background:linear-gradient(#fdfdfd,#e2e2e2)"></div>
<svg style="position:absolute;left:780px;top:515px;" width="13" height="16" viewBox="0 0 13 16"><path d="M3.4 6.2 L6.5 9.6 L9.6 6.2" fill="none" stroke="#1670c0" stroke-width="1.4"/></svg>
<span class="t" id="t73" style="left:799px;top:518px;font-size:11px;font-weight:400;color:#8aaace;letter-spacing:0.011px;">Quota a consumo (fC,c) [%]</span>
<div style="position:absolute;left:1158px;top:513px;width:80px;height:20px;border:1px solid #a9a9a9;box-sizing:border-box;background:#e9e9e9"></div>
<div style="position:absolute;left:1223px;top:515px;width:13px;height:16px;border:1px solid #9cc8ec;border-radius:2px;box-sizing:border-box;background:#f0f0f0"></div>
<svg style="position:absolute;left:1223px;top:515px;" width="13" height="16" viewBox="0 0 13 16"><line x1="1" y1="8.0" x2="12" y2="8.0" stroke="#9cc8ec" stroke-width="1"/><path d="M4 5.5 L6.5 3.0 L9 5.5" fill="none" stroke="#9cc0e0" stroke-width="1.2"/><path d="M4 10.5 L6.5 13.0 L9 10.5" fill="none" stroke="#9cc0e0" stroke-width="1.2"/></svg>
<span class="t" id="t74" style="right:70px;top:518px;font-size:11px;font-weight:400;color:#8fb0d2;letter-spacing:-0.141px;">0,00</span>
<span class="t" id="t75" style="left:324.7px;top:542px;font-size:11px;font-weight:400;color:#000;letter-spacing:-0.205px;">Contabilizzazione in centrale</span>
<div style="position:absolute;left:517px;top:537px;width:278px;height:20px;border:1px solid #a9a9a9;box-sizing:border-box;background:#fff"></div>
<span class="t" id="t76" style="left:520px;top:542px;font-size:11px;font-weight:400;color:#000;letter-spacing:-0.251px;">Per singolo servizio</span>
<div style="position:absolute;left:780px;top:539px;width:13px;height:16px;border:1px solid #1c80cc;border-radius:3px;box-sizing:border-box;background:linear-gradient(#fdfdfd,#e2e2e2)"></div>
<svg style="position:absolute;left:780px;top:539px;" width="13" height="16" viewBox="0 0 13 16"><path d="M3.4 6.2 L6.5 9.6 L9.6 6.2" fill="none" stroke="#1670c0" stroke-width="1.4"/></svg>
<span class="t" id="t77" style="left:799px;top:542px;font-size:11px;font-weight:400;color:#000;letter-spacing:-0.237px;">Contabilizzazione di edificio</span>
<div style="position:absolute;left:991px;top:537px;width:247px;height:20px;border:1px solid #a9a9a9;box-sizing:border-box;background:#fff"></div>
<span class="t" id="t78" style="left:994px;top:542px;font-size:11px;font-weight:400;color:#000;letter-spacing:-0.086px;">Linee dedicate con contatore all’arrivo</span>
<div style="position:absolute;left:1223px;top:539px;width:13px;height:16px;border:1px solid #1c80cc;border-radius:3px;box-sizing:border-box;background:linear-gradient(#fdfdfd,#e2e2e2)"></div>
<svg style="position:absolute;left:1223px;top:539px;" width="13" height="16" viewBox="0 0 13 16"><path d="M3.4 6.2 L6.5 9.6 L9.6 6.2" fill="none" stroke="#1670c0" stroke-width="1.4"/></svg>
<span class="t" id="t79" style="left:324.7px;top:566px;font-size:11px;font-weight:400;color:#000;letter-spacing:-0.363px;">Metodo di calcolo millesimi</span>
<div style="position:absolute;left:517px;top:561px;width:228px;height:20px;border:1px solid #a9a9a9;box-sizing:border-box;background:#fff"></div>
<span class="t" id="t80" style="left:520px;top:566px;font-size:11px;font-weight:400;color:#000;letter-spacing:-0.335px;">Millesimi di fabbisogno</span>
<div style="position:absolute;left:730px;top:563px;width:13px;height:16px;border:1px solid #1c80cc;border-radius:3px;box-sizing:border-box;background:linear-gradient(#fdfdfd,#e2e2e2)"></div>
<svg style="position:absolute;left:730px;top:563px;" width="13" height="16" viewBox="0 0 13 16"><path d="M3.4 6.2 L6.5 9.6 L9.6 6.2" fill="none" stroke="#1670c0" stroke-width="1.4"/></svg>
<span class="t" id="t81" style="left:799px;top:569px;font-size:11px;font-weight:400;color:#000;letter-spacing:-0.044px;">Tipo contab. lato utenza:</span>
<div style="position:absolute;left:991px;top:567px;width:13px;height:13px;border-left:1px solid #7a7a7a;border-top:1px solid #7a7a7a;border-right:1px solid #c8c8c8;border-bottom:1px solid #c8c8c8;box-sizing:border-box;background:#fff"></div>
<div style="position:absolute;left:992px;top:568px;width:11px;height:11px;border-left:1px solid #000;border-top:1px solid #000;box-sizing:border-box"></div>
<span class="t" id="t82" style="left:1011.7px;top:569px;font-size:11px;font-weight:400;color:#000;letter-spacing:0.057px;">Contatori diretti</span>
<div style="position:absolute;left:323px;top:587px;width:917px;height:1px;background:#b0b0b0"></div>
<div style="position:absolute;left:325px;top:595px;width:13px;height:13px;border-left:1px solid #7a7a7a;border-top:1px solid #7a7a7a;border-right:1px solid #c8c8c8;border-bottom:1px solid #c8c8c8;box-sizing:border-box;background:#fff"></div>
<div style="position:absolute;left:326px;top:596px;width:11px;height:11px;border-left:1px solid #000;border-top:1px solid #000;box-sizing:border-box"></div>
<svg style="position:absolute;left:325px;top:594px;" width="20" height="15" viewBox="0 0 20 15"><path d="M6.2 12.3 L18 3.6" fill="none" stroke="#8a8a8a" stroke-width="2.3"/><path d="M2 3.9 L4.6 10.4 L16 1.3" fill="none" stroke="#0000f0" stroke-width="1.6"/></svg>
<span class="t" id="t83" style="left:345.8px;top:596px;font-size:11px;font-weight:700;color:#000;letter-spacing:-0.090px;">Ventilazione meccanica</span>
<span class="t" id="t84" style="left:324.7px;top:624px;font-size:11px;font-weight:400;color:#000;letter-spacing:-0.363px;">Metodo di calcolo millesimi</span>
<div style="position:absolute;left:517px;top:619px;width:228px;height:20px;border:1px solid #a9a9a9;box-sizing:border-box;background:#fff"></div>
<span class="t" id="t85" style="left:520px;top:624px;font-size:11px;font-weight:400;color:#000;letter-spacing:-0.215px;">Millesimi di portata</span>
<div style="position:absolute;left:730px;top:621px;width:13px;height:16px;border:1px solid #1c80cc;border-radius:3px;box-sizing:border-box;background:linear-gradient(#fdfdfd,#e2e2e2)"></div>
<svg style="position:absolute;left:730px;top:621px;" width="13" height="16" viewBox="0 0 13 16"><path d="M3.4 6.2 L6.5 9.6 L9.6 6.2" fill="none" stroke="#1670c0" stroke-width="1.4"/></svg>
<div style="position:absolute;left:325px;top:647px;width:13px;height:13px;border-left:1px solid #7a7a7a;border-top:1px solid #7a7a7a;border-right:1px solid #c8c8c8;border-bottom:1px solid #c8c8c8;box-sizing:border-box;background:#fff"></div>
<div style="position:absolute;left:326px;top:648px;width:11px;height:11px;border-left:1px solid #000;border-top:1px solid #000;box-sizing:border-box"></div>
<svg style="position:absolute;left:325px;top:646px;" width="20" height="15" viewBox="0 0 20 15"><path d="M6.2 12.3 L18 3.6" fill="none" stroke="#8a8a8a" stroke-width="2.3"/><path d="M2 3.9 L4.6 10.4 L16 1.3" fill="none" stroke="#0000f0" stroke-width="1.6"/></svg>
<span class="t" id="t86" style="left:345.8px;top:648px;font-size:11px;font-weight:700;color:#000;letter-spacing:0.041px;">Riscaldamento aeraulico&nbsp; (trattamento aria)</span>
<span class="t" id="t87" style="left:324.7px;top:674px;font-size:11px;font-weight:400;color:#000;letter-spacing:-0.363px;">Metodo di calcolo millesimi</span>
<div style="position:absolute;left:517px;top:669px;width:228px;height:20px;border:1px solid #a9a9a9;box-sizing:border-box;background:#fff"></div>
<span class="t" id="t88" style="left:520px;top:674px;font-size:11px;font-weight:400;color:#000;letter-spacing:-0.335px;">Millesimi di fabbisogno</span>
<div style="position:absolute;left:730px;top:671px;width:13px;height:16px;border:1px solid #1c80cc;border-radius:3px;box-sizing:border-box;background:linear-gradient(#fdfdfd,#e2e2e2)"></div>
<svg style="position:absolute;left:730px;top:671px;" width="13" height="16" viewBox="0 0 13 16"><path d="M3.4 6.2 L6.5 9.6 L9.6 6.2" fill="none" stroke="#1670c0" stroke-width="1.4"/></svg>
<div style="position:absolute;left:323px;top:691px;width:917px;height:1px;background:#b0b0b0"></div>
<div style="position:absolute;left:325px;top:699px;width:13px;height:13px;border-left:1px solid #7a7a7a;border-top:1px solid #7a7a7a;border-right:1px solid #c8c8c8;border-bottom:1px solid #c8c8c8;box-sizing:border-box;background:#fff"></div>
<div style="position:absolute;left:326px;top:700px;width:11px;height:11px;border-left:1px solid #000;border-top:1px solid #000;box-sizing:border-box"></div>
<span class="t" id="t89" style="left:346.4px;top:700px;font-size:11px;font-weight:700;color:#000;letter-spacing:0.068px;">Altri usi</span>
<span class="t" id="t90" style="left:324.7px;top:726px;font-size:11px;font-weight:400;color:#8aaace;letter-spacing:-0.363px;">Metodo di calcolo millesimi</span>
<div style="position:absolute;left:517px;top:721px;width:228px;height:20px;border:1px solid #a9a9a9;box-sizing:border-box;background:#e9e9e9"></div>
<span class="t" id="t91" style="left:520px;top:726px;font-size:11px;font-weight:400;color:#8fb0d2;letter-spacing:-0.335px;">Millesimi di fabbisogno</span>
<div style="position:absolute;left:730px;top:723px;width:13px;height:16px;border:1px solid #9cc8ec;border-radius:3px;box-sizing:border-box;background:#f2f2f2"></div>
<svg style="position:absolute;left:730px;top:723px;" width="13" height="16" viewBox="0 0 13 16"><path d="M3.4 6.2 L6.5 9.6 L9.6 6.2" fill="none" stroke="#a8c8e8" stroke-width="1.4"/></svg>
<div style="position:absolute;left:320px;top:775px;width:923px;height:53px;border:1px solid #d4d4d4;border-radius:3px;box-sizing:border-box;background:#fcfcfc"></div>
<div style="position:absolute;left:321px;top:776px;width:921px;height:19px;background:linear-gradient(#fcfcfc,#f2f2f2 40%,#dcdcdc)"></div>
<span class="t" id="t92" style="left:331.5px;top:780px;font-size:11px;font-weight:700;color:#000;letter-spacing:0.342px;">Considera le unità immobiliari distaccate nelle spese di:</span>
<div style="position:absolute;left:327px;top:804px;width:13px;height:13px;border-left:1px solid #7a7a7a;border-top:1px solid #7a7a7a;border-right:1px solid #c8c8c8;border-bottom:1px solid #c8c8c8;box-sizing:border-box;background:#fff"></div>
<div style="position:absolute;left:328px;top:805px;width:11px;height:11px;border-left:1px solid #000;border-top:1px solid #000;box-sizing:border-box"></div>
<svg style="position:absolute;left:327px;top:803px;" width="20" height="15" viewBox="0 0 20 15"><path d="M6.2 12.3 L18 3.6" fill="none" stroke="#8a8a8a" stroke-width="2.3"/><path d="M2 3.9 L4.6 10.4 L16 1.3" fill="none" stroke="#0000f0" stroke-width="1.6"/></svg>
<span class="t" id="t93" style="left:347px;top:806px;font-size:11px;font-weight:400;color:#000;letter-spacing:-0.205px;">Consumo involontario</span>
<div style="position:absolute;left:528px;top:804px;width:13px;height:13px;border-left:1px solid #7a7a7a;border-top:1px solid #7a7a7a;border-right:1px solid #c8c8c8;border-bottom:1px solid #c8c8c8;box-sizing:border-box;background:#fff"></div>
<div style="position:absolute;left:529px;top:805px;width:11px;height:11px;border-left:1px solid #000;border-top:1px solid #000;box-sizing:border-box"></div>
<svg style="position:absolute;left:528px;top:803px;" width="20" height="15" viewBox="0 0 20 15"><path d="M6.2 12.3 L18 3.6" fill="none" stroke="#8a8a8a" stroke-width="2.3"/><path d="M2 3.9 L4.6 10.4 L16 1.3" fill="none" stroke="#0000f0" stroke-width="1.6"/></svg>
<span class="t" id="t94" style="left:548.9px;top:806px;font-size:11px;font-weight:400;color:#000;letter-spacing:-0.252px;">Conduzione e manutenzione</span>
<div style="position:absolute;left:731px;top:804px;width:13px;height:13px;border-left:1px solid #7a7a7a;border-top:1px solid #7a7a7a;border-right:1px solid #c8c8c8;border-bottom:1px solid #c8c8c8;box-sizing:border-box;background:#fff"></div>
<div style="position:absolute;left:732px;top:805px;width:11px;height:11px;border-left:1px solid #000;border-top:1px solid #000;box-sizing:border-box"></div>
<svg style="position:absolute;left:731px;top:803px;" width="20" height="15" viewBox="0 0 20 15"><path d="M6.2 12.3 L18 3.6" fill="none" stroke="#8a8a8a" stroke-width="2.3"/><path d="M2 3.9 L4.6 10.4 L16 1.3" fill="none" stroke="#0000f0" stroke-width="1.6"/></svg>
<span class="t" id="t95" style="left:751px;top:806px;font-size:11px;font-weight:400;color:#000;letter-spacing:-0.197px;">Gestione del servizio di contabilizzazione</span>
</body></html>
